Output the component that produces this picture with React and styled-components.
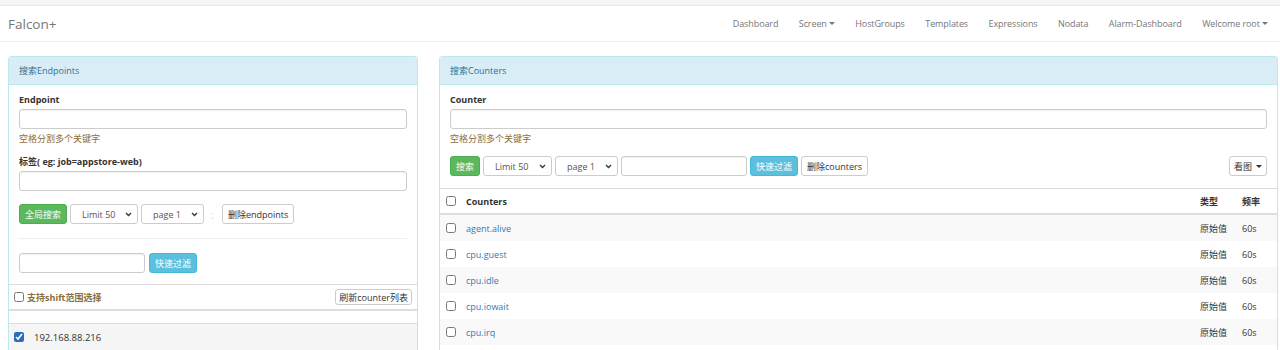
import styled, { createGlobalStyle } from 'styled-components'

const GlobalStyle = createGlobalStyle`
	* { box-sizing: border-box; }
	body {
		margin: 0;
		background: #fff;
		color: #333;
		font-family: "Open Sans", "Noto Sans CJK SC", sans-serif;
		font-size: 9px;
	}
`

const TopStrip = styled.div`
	height: 6px;
	background: #f5f5f5;
	border-bottom: 1px solid #e8e8e8;
`

const Navbar = styled.nav`
	height: 36px;
	display: flex;
	align-items: center;
	justify-content: space-between;
	padding: 0 2px 0 8px;
	border-bottom: 1px solid #eee;
`

const Brand = styled.div`
	font-size: 13.5px;
	color: #777;
`

const NavLinks = styled.div`
	display: flex;
	align-items: center;
`

const NavItem = styled.a`
	display: flex;
	align-items: center;
	padding: 0 10.25px;
	color: #777;
	font-size: 9px;
	letter-spacing: -0.1px;
`

const Caret = styled.span`
	display: inline-block;
	margin-left: 2px;
	border-top: 3px solid ${p => p.$color || '#777'};
	border-left: 3px solid transparent;
	border-right: 3px solid transparent;
`

const Main = styled.div`
	display: grid;
	grid-template-columns: 410px 1fr;
	gap: 21px;
	padding: 14px 2px 0 8px;
	align-items: start;
`

const Panel = styled.section`
	border: 1px solid #bce8f1;
	border-radius: 3px;
	background: #fff;
	overflow: hidden;
`

const PanelHeading = styled.div`
	height: 28px;
	display: flex;
	align-items: center;
	padding: 0 10px;
	background: #d9edf7;
	color: #31708f;
	border-bottom: 1px solid #bce8f1;
`

const PanelBody = styled.div`
	padding: 9px 10px ${p => p.$bottom || 11}px;
`

const Label = styled.label`
	display: block;
	font-weight: bold;
	line-height: 12px;
	margin-top: ${p => p.$top || 0}px;
	margin-bottom: 3px;
`

const TextInput = styled.input`
	display: block;
	width: ${p => p.$width ? `${p.$width}px` : '100%'};
	height: 20px;
	margin: 0;
	border: 1px solid #ccc;
	border-radius: 3px;
	background: #fff;
	box-shadow: inset 0 1px 1px rgba(0, 0, 0, 0.06);
`

const Help = styled.p`
	margin: 4px 0 0;
	line-height: 12px;
	color: #8a6d3b;
`

const Toolbar = styled.div`
	display: flex;
	align-items: center;
	gap: ${p => p.$gap || 3}px;
	margin-top: ${p => p.$top || 0}px;
`

const Button = styled.button`
	height: ${p => p.$height || 20}px;
	padding: 0 ${p => p.$pad ?? 5}px;
	border-radius: 3px;
	font-family: inherit;
	font-size: 9px;
	cursor: pointer;
	white-space: nowrap;
	display: flex;
	align-items: center;
	gap: 2px;
	border: 1px solid ${p =>
		p.$variant === 'success' ? '#4cae4c' : p.$variant === 'info' ? '#46b8da' : '#ccc'};
	background: ${p =>
		p.$variant === 'success' ? '#5cb85c' : p.$variant === 'info' ? '#5bc0de' : '#fff'};
	color: ${p => (p.$variant ? '#fff' : '#333')};
	margin-left: ${p => (p.$right ? 'auto' : '0')};
`

const SelectBox = styled.div`
	width: ${p => p.$width}px;
	height: 20px;
	display: flex;
	align-items: center;
	justify-content: space-between;
	padding: 0 5px 0 11px;
	border: 1px solid #ccc;
	border-radius: 3px;
	background: #fff;
	color: #555;
`

const Separator = styled.span`
	color: #d5d5d5;
	font-size: 11px;
	margin: 0 5px 0 4px;
`

const Rule = styled.hr`
	margin: 14px 0;
	border: 0;
	border-top: 1px solid #eee;
`

const ShiftBar = styled.div`
	height: 27px;
	display: flex;
	align-items: center;
	justify-content: space-between;
	padding: 0 5px;
	border-top: 1px solid #ddd;
	border-bottom: 2px solid #ddd;
`

const CheckLabel = styled.label`
	display: flex;
	align-items: center;
	gap: 3px;
	font-weight: bold;
	color: #8a6d3b;
`

const Check = styled.input.attrs({ type: 'checkbox' })`
	width: 10px;
	height: 10px;
	margin: 0;
	accent-color: #2a6ebb;
`

const Spacer = styled.div`
	height: 12px;
`

const HostList = styled.div`
	padding-bottom: 10px;
`

const HostRow = styled.div`
	height: 27px;
	display: flex;
	align-items: center;
	gap: 10px;
	padding: 0 5px;
	border-top: 1px solid #ddd;
	background: #f5f5f5;
	font-size: 9.5px;
`

const Table = styled.div`
	border-top: 1px solid #ddd;
	padding-bottom: 10px;
`

const Row = styled.div`
	display: grid;
	grid-template-columns: 20px 1fr 42px 35px;
	align-items: center;
	height: 26px;
	padding-left: 6px;
	background: ${p => (p.$striped ? '#f9f9f9' : '#fff')};
	border-bottom: ${p => (p.$head ? '2px solid #ddd' : '0')};
	font-weight: ${p => (p.$head ? 'bold' : 'normal')};
`

const CounterLink = styled.a`
	color: #337ab7;
	text-decoration: none;
`

const Chevron = () => (
	<svg width="7" height="5" viewBox="0 0 7 5">
		<polyline points="1,1 3.5,3.5 6,1" fill="none" stroke="#333" strokeWidth="1.3" />
	</svg>
)

const counters = ['agent.alive', 'cpu.guest', 'cpu.idle', 'cpu.iowait', 'cpu.irq']

const navItems = [
	{ name: 'Dashboard' },
	{ name: 'Screen', caret: true },
	{ name: 'HostGroups' },
	{ name: 'Templates' },
	{ name: 'Expressions' },
	{ name: 'Nodata' },
	{ name: 'Alarm-Dashboard' },
	{ name: 'Welcome root', caret: true },
]

const App = () => {
	return (
		<>
			<GlobalStyle />
			<TopStrip />
			<Navbar>
				<Brand>Falcon+</Brand>
				<NavLinks>
					{navItems.map(item => (
						<NavItem key={item.name}>
							{item.name}
							{item.caret && <Caret />}
						</NavItem>
					))}
				</NavLinks>
			</Navbar>
			<Main>
				<Panel>
					<PanelHeading>搜索Endpoints</PanelHeading>
					<PanelBody>
						<Label>Endpoint</Label>
						<TextInput />
						<Help>空格分割多个关键字</Help>
						<Label $top={11}>标签( eg: job=appstore-web)</Label>
						<TextInput />
						<Toolbar $top={13}>
							<Button $variant="success">全局搜索</Button>
							<SelectBox $width={68}>
								Limit 50 <Chevron />
							</SelectBox>
							<SelectBox $width={63}>
								page 1 <Chevron />
							</SelectBox>
							<Separator>:</Separator>
							<Button>删除endpoints</Button>
						</Toolbar>
						<Rule />
						<Toolbar $gap={4}>
							<TextInput $width={126} />
							<Button $variant="info">快速过滤</Button>
						</Toolbar>
					</PanelBody>
					<ShiftBar>
						<CheckLabel>
							<Check />
							支持shift范围选择
						</CheckLabel>
						<Button $height={16} $pad={3}>刷新counter列表</Button>
					</ShiftBar>
					<Spacer />
					<HostList>
						<HostRow>
							<Check defaultChecked />
							192.168.88.216
						</HostRow>
					</HostList>
				</Panel>

				<Panel>
					<PanelHeading>搜索Counters</PanelHeading>
					<PanelBody $bottom={12}>
						<Label>Counter</Label>
						<TextInput />
						<Help>空格分割多个关键字</Help>
						<Toolbar $top={11}>
							<Button $variant="success">搜索</Button>
							<SelectBox $width={69}>
								Limit 50 <Chevron />
							</SelectBox>
							<SelectBox $width={63}>
								page 1 <Chevron />
							</SelectBox>
							<TextInput $width={126} />
							<Button $variant="info">快速过滤</Button>
							<Button>删除counters</Button>
							<Button $right $pad={4}>
								看图
								<Caret $color="#333" />
							</Button>
						</Toolbar>
					</PanelBody>
					<Table>
						<Row $head>
							<Check />
							<span>Counters</span>
							<span>类型</span>
							<span>频率</span>
						</Row>
						{counters.map((c, i) => (
							<Row key={c} $striped={i % 2 === 0}>
								<Check />
								<CounterLink>{c}</CounterLink>
								<span>原始值</span>
								<span>60s</span>
							</Row>
						))}
					</Table>
				</Panel>
			</Main>
		</>
	)
}

export default App
